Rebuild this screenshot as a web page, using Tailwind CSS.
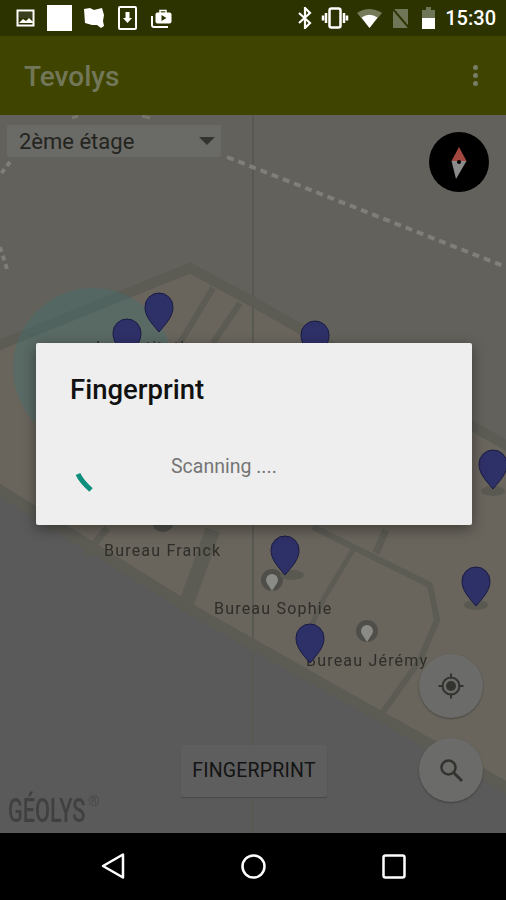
<!doctype html>
<html>
<head>
<meta charset="utf-8">
<script src="https://cdn.jsdelivr.net/npm/@tailwindcss/browser@4"></script>
</head>
<body class="m-0 bg-black">
<div class="relative w-[506px] h-[900px] overflow-hidden flex flex-col font-['Roboto',sans-serif]">

  <!-- status bar -->
  <div class="h-[36px] shrink-0 bg-[#2c3300] flex items-center justify-between pl-[16px] pr-[10px]">
    <div class="flex items-center">
      <svg class="mr-[11px]" width="20" height="20" viewBox="0 0 20 20"><rect x="1.500" y="2.500" width="16" height="15" fill="none" stroke="#fff" stroke-width="2"/><path d="M3 15l4-4 3 2 3-3 4 4v1H3z" fill="#fff"/><rect x="3" y="4" width="13" height="6" fill="#3a3f20"/></svg>
      <div class="w-[25px] h-[26px] bg-white mr-[11px]"></div>
      <svg class="mr-[13px]" width="22" height="24" viewBox="0 0 22 24"><path d="M1 3l6-1 4 2 8-2 2 7-1 6 1 5-3 2-4-3-5 0-7-2z" fill="#fff"/></svg>
      <svg class="mr-[13px]" width="19" height="24" viewBox="0 0 19 24"><rect x="1" y="1" width="17" height="22" rx="1" fill="none" stroke="#fff" stroke-width="2"/><path d="M7.500 6h4v6h2.500l-4.500 5-4.500-5h2.500z" fill="#fff"/></svg>
      <svg width="23" height="20" viewBox="0 0 23 20"><path d="M2 8v9q0 2 2 2h14" fill="none" stroke="#fff" stroke-width="2"/><rect x="5.500" y="4.500" width="16" height="11" rx="2" fill="#fff"/><path d="M10 2.500h6v3h-6z" fill="none" stroke="#fff" stroke-width="1.500"/><path d="M11.500 7l5 3-5 3z" fill="#2c3300"/></svg>
    </div>
    <div class="flex items-center">
      <svg width="16" height="22" viewBox="0 0 16 22" class="mr-[8px]"><path d="M2 6l11 10-5 5V1l5 5L2 16" fill="none" stroke="#fff" stroke-width="2.200"/></svg>
      <svg width="28" height="22" viewBox="0 0 28 22" class="mr-[8px]"><rect x="8.500" y="1.500" width="11" height="19" rx="2" fill="#2c3300" stroke="#fff" stroke-width="2.500"/><path d="M5 6v10M2 8.500v5M23 6v10M26 8.500v5" stroke="#fff" stroke-width="2.500" fill="none"/></svg>
      <svg width="25" height="20" viewBox="0 0 25 20" class="mr-[10px]"><path d="M0 5Q12-3 25 5L12.500 20z" fill="#747a5a"/><path d="M4.500 9.500Q12.500 4 20.500 9.500L12.500 20z" fill="#fff"/></svg>
      <svg width="18" height="21" viewBox="0 0 18 21" class="mr-[11px]"><path d="M1 1h15v19H1z" fill="#6f7657"/><path d="M0 0l18 21" stroke="#2c3300" stroke-width="2"/></svg>
      <svg width="15" height="24" viewBox="0 0 15 24" class="mr-[9px]"><path d="M1 4h4V1h5v3h4v19H1z" fill="#6f7657"/><path d="M1 12h13v11H1z" fill="#fff"/></svg>
      <span class="text-white text-[20px] font-medium leading-none">15:30</span>
    </div>
  </div>

  <!-- app bar -->
  <div class="h-[79px] shrink-0 bg-[#3f4500] flex items-center justify-between pl-[24px] pr-[28px] z-10">
    <span class="text-[#73775a] text-[28px] font-medium leading-none pt-[2px]">Tevolys</span>
    <div class="flex flex-col gap-[3px]">
      <span class="block w-[5px] h-[5px] rounded-full bg-[#787c68]"></span>
      <span class="block w-[5px] h-[5px] rounded-full bg-[#787c68]"></span>
      <span class="block w-[5px] h-[5px] rounded-full bg-[#787c68]"></span>
    </div>
  </div>

  <!-- map -->
  <div class="relative flex-1 bg-[#62615b] overflow-hidden">
    <svg class="absolute inset-0 blur-[0.6px]" width="506" height="718" viewBox="0 115 506 718">
      <path d="M-5 110H511V840H-5z" fill="#62615b"/>
      <path d="M-5 487L197 613 511 790V840H-5z" fill="#5a5a5a"/>
      <path d="M0 345L190 268 253 300 506 443V787L197 613 0 487z" fill="#69655d"/>
      <path d="M253 115V833" stroke="#595953" stroke-width="2"/>
      <g fill="none" stroke="#5c5b54">
        <path d="M-5 347L190 268 253 302 511 448" stroke-width="10"/>
        <path d="M-5 487L197 613 511 790" stroke-width="11"/>
        <path d="M213 288L180 343M240 303L213 343" stroke-width="6"/>
        <path d="M213 530L185 607" stroke-width="15"/>
        <path d="M107 528L85 556" stroke-width="7"/>
        <path d="M313 527L430 585 437 620 420 660 383 712" stroke-width="6"/>
        <path d="M353 550L323 600 305 640" stroke-width="5"/>
        <path d="M386 530L376 553" stroke-width="7"/>
      </g>
      <circle cx="93" cy="368" r="80" fill="#3f7270" fill-opacity="0.38"/>
      <path d="M227 157L506 267" stroke="#7f7e79" stroke-width="4" stroke-dasharray="7 5" fill="none"/>
      <path d="M10 162L0 175M0 247L8 272" stroke="#7f7e79" stroke-width="4" stroke-dasharray="5 4" fill="none"/>
      <path d="M72 118L78 116M142 116L150 118" stroke="#77766f" stroke-width="3" fill="none"/>
      <g font-family="Roboto, sans-serif" font-size="16" fill="#2e2d29" letter-spacing="1.200">
        <text x="104" y="556">Bureau Franck</text>
        <text x="214" y="614">Bureau Sophie</text>
        <text x="306" y="666">Bureau Jérémy</text>
        <text x="96" y="353">Le Institution</text>
      </g>
      <g>
        <circle cx="272" cy="580" r="11" fill="#4f4e49"/><circle cx="272" cy="580" r="6" fill="#8a8a86"/><path d="M267 583L272 591 277 583z" fill="#8a8a86"/>
        <circle cx="367" cy="631" r="11" fill="#4f4e49"/><circle cx="367" cy="631" r="6" fill="#8a8a86"/><path d="M362 634L367 642 372 634z" fill="#8a8a86"/>
        <circle cx="163" cy="521" r="11" fill="#4f4e49"/>
      </g>
      <g fill="#5a5951">
        <ellipse cx="292" cy="575" rx="12" ry="5"/>
        <ellipse cx="476" cy="605" rx="12" ry="5"/>
        <ellipse cx="493" cy="491" rx="12" ry="5"/>
      </g>
      <defs>
        <path id="pin" d="M0 0C-8.500-10-14-16-14-25A14 14 0 0 1 14-25C14-16 8.500-10 0 0z" fill="#2e3068" stroke="#1a1b42" stroke-width="1"/>
      </defs>
      <use href="#pin" x="159" y="332"/>
      <use href="#pin" x="127" y="358"/>
      <use href="#pin" x="315" y="360"/>
      <use href="#pin" x="493" y="489"/>
      <use href="#pin" x="285" y="575"/>
      <use href="#pin" x="476" y="606"/>
      <use href="#pin" x="310" y="663"/>
      <text transform="translate(8 822) scale(0.66 1)" font-family="Roboto, sans-serif" font-size="33" font-weight="500" fill="#404040">GÉOLYS</text>
      <text x="88" y="806" font-family="Roboto, sans-serif" font-size="15" fill="#4a4a4a">®</text>
    </svg>

    <!-- floor selector -->
    <div class="absolute left-[7px] top-[10px] w-[214px] h-[32px] bg-[#6a6a66] rounded-[2px] flex items-center justify-between pl-[12px] pr-[6px]">
      <span class="text-[#24241f] text-[22px] leading-none pt-[1px]">2ème étage</span>
      <svg width="16" height="8" viewBox="0 0 16 8"><path d="M0 0H16L8 8z" fill="#33332f"/></svg>
    </div>

    <!-- compass -->
    <div class="absolute left-[429px] top-[17px] w-[60px] h-[60px] rounded-full bg-black flex items-center justify-center">
      <svg width="60" height="60" viewBox="0 0 60 60"><path d="M30 15L22.500 29H37.500z" fill="#a4483f"/><path d="M22.500 29L27 47 37.500 29z" fill="#8b8b8b"/><circle cx="30" cy="30" r="2" fill="#000"/></svg>
    </div>

    <!-- floating buttons -->
    <div class="absolute left-[419px] top-[539px] w-[64px] h-[64px] rounded-full bg-[#6b6b69] shadow-[0_1px_2px_rgba(0,0,0,0.3)] flex items-center justify-center">
      <svg width="28" height="28" viewBox="0 0 28 28"><circle cx="14" cy="14" r="8.500" fill="none" stroke="#33332f" stroke-width="2"/><circle cx="14" cy="14" r="5" fill="#33332f"/><path d="M14 1.500v5M14 21.500v5M1.500 14h5M21.500 14h5" stroke="#33332f" stroke-width="2"/></svg>
    </div>
    <div class="absolute left-[419px] top-[623px] w-[64px] h-[64px] rounded-full bg-[#6b6b69] shadow-[0_1px_2px_rgba(0,0,0,0.3)] flex items-center justify-center">
      <svg width="26" height="26" viewBox="0 0 26 26"><circle cx="10.500" cy="10.500" r="7" fill="none" stroke="#33332f" stroke-width="2.500"/><path d="M16 16l8 8" stroke="#33332f" stroke-width="3"/></svg>
    </div>

    <!-- fingerprint button -->
    <div class="absolute left-[181px] top-[630px] w-[146px] h-[52px] bg-[#5e5e5e] rounded-[2px] shadow-[0_1px_1px_rgba(0,0,0,0.2)] flex items-center justify-center">
      <span class="text-[#141414] text-[19.500px] leading-none font-normal tracking-[0.2px]">FINGERPRINT</span>
    </div>
  </div>

  <!-- nav bar -->
  <div class="h-[67px] shrink-0 bg-black flex items-center relative">
    <svg class="absolute left-[100px] top-[19px]" width="28" height="28" viewBox="0 0 28 28"><path d="M23 2.500V25.500L3 14z" fill="none" stroke="#fff" stroke-width="2.500" stroke-linejoin="round"/></svg>
    <svg class="absolute left-[240px] top-[20px]" width="27" height="27" viewBox="0 0 27 27"><circle cx="13.500" cy="13.500" r="11" fill="none" stroke="#fff" stroke-width="2.500"/></svg>
    <svg class="absolute left-[382px] top-[21px]" width="24" height="25" viewBox="0 0 24 25"><rect x="1.500" y="1.500" width="21" height="22" rx="2" fill="none" stroke="#fff" stroke-width="2.500"/></svg>
  </div>

  <!-- dialog -->
  <div class="absolute left-[36px] top-[343px] w-[436px] h-[182px] bg-[#eeeeee] rounded-[2px] shadow-[0_4px_14px_rgba(0,0,0,0.4)] z-20">
    <div class="pl-[34px] pt-[31px] text-[#111111] text-[27.500px] font-medium leading-[32px]">Fingerprint</div>
    <div class="absolute left-[135px] top-[112px] text-[#757575] text-[19.500px] leading-[24px]">Scanning ....</div>
    <svg class="absolute left-[38px] top-[126px]" width="22" height="26" viewBox="0 0 22 26"><path d="M4 5Q7 12 17 21" fill="none" stroke="#0e8f7e" stroke-width="5"/></svg>
  </div>
</div>
</body>
</html>
